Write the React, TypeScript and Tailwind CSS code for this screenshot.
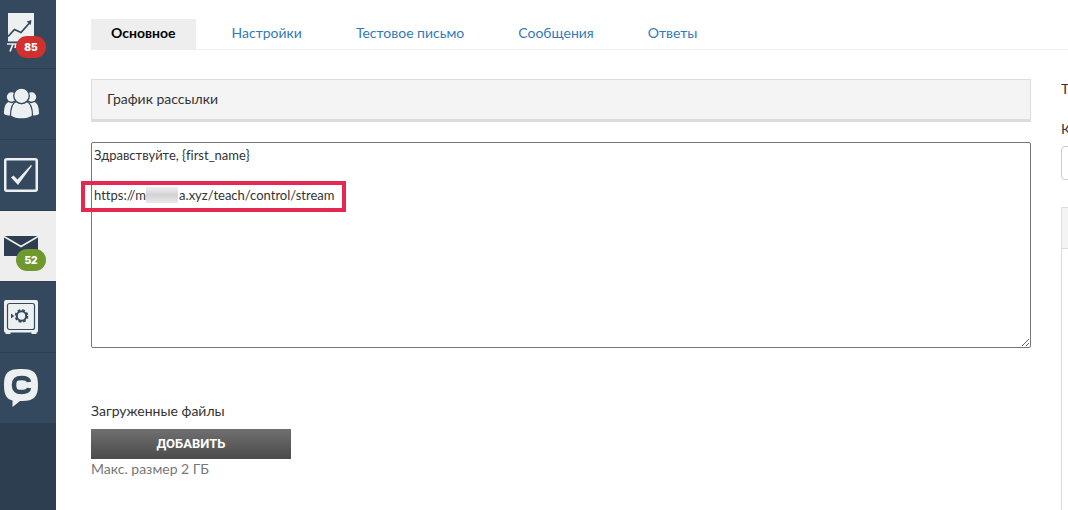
import type { ReactNode } from 'react';

const tabs = ['Настройки', 'Тестовое письмо', 'Сообщения', 'Ответы'];

const initialMessage =
  'Здравствуйте, {first_name}\n\nhttps://m' + '\u00a0'.repeat(10) + 'a.xyz/teach/control/stream';

function ChartIcon() {
  return (
    <svg className="block h-10 w-9" viewBox="0 0 36 40" fill="none" aria-hidden="true">
      <path d="M4 0h26v28.500H4z" fill="#ecf0f1" />
      <path d="M4 23.500l6.500-7 6.500 3 8.500-9.500" stroke="#34495e" strokeWidth="1.800" />
      <path d="M27.500 7l-.8 5-4-3.500z" fill="#34495e" />
      <path d="M3 31h28M9 31l-3 7.500M12 31l-1 4" stroke="#ecf0f1" strokeWidth="1.700" />
    </svg>
  );
}

function UsersIcon() {
  return (
    <svg className="block h-8 w-9" viewBox="0 0 36 32" fill="#ecf0f1" aria-hidden="true">
      <circle cx="7.500" cy="9" r="4.700" />
      <circle cx="27.500" cy="9" r="4.700" />
      <path d="M0 26c0-6 1-10.500 4.500-12 2 1.500 4.500 1.500 6.500 0l2 2-5 11.500c-3 .2-6-.3-8-1.500z" />
      <path d="M35 26c0-6-1-10.500-4.500-12-2 1.500-4.500 1.500-6.500 0l-2 2 5 11.500c3 .2 6-.3 8-1.500z" />
      <path
        d="M6.500 28c0-7 1.500-13 6-14.500 3 2.500 7 2.500 10 0 4.500 1.500 6 7.500 6 14.500-6 4-16 4-22 0z"
        stroke="#34495e"
        strokeWidth="1.300"
      />
      <circle cx="17.500" cy="7.800" r="7.800" stroke="#34495e" strokeWidth="1.300" />
    </svg>
  );
}

function CheckIcon() {
  return (
    <svg className="block h-[34px] w-[34px]" viewBox="0 0 34 34" fill="none" aria-hidden="true">
      <rect x="1.250" y="1.250" width="31.500" height="31.500" rx="1.500" stroke="#ecf0f1" strokeWidth="2.500" />
      <path d="M7 19.500l2.500-2 4 4L27 7l1 .8L14 27z" fill="#ecf0f1" />
    </svg>
  );
}

function MailIcon() {
  return (
    <svg className="block h-5 w-[34px]" viewBox="0 0 34 20" fill="none" aria-hidden="true">
      <path d="M0 0h34v20H0z" fill="#2c3e50" />
      <path d="M0 .5l17 10 17-10" stroke="#eeeeee" strokeWidth="1.600" />
    </svg>
  );
}

function SafeIcon() {
  return (
    <svg className="block h-[34px] w-[34px]" viewBox="0 0 34 34" fill="none" aria-hidden="true">
      <path d="M2 0h30q2 0 2 2v29q0 1.500-1.500 1.500V34h-5v-1.500h-21V34h-5v-1.500Q0 32.500 0 31V2q0-2 2-2z" fill="#ecf0f1" />
      <rect x="3.500" y="3.500" width="27" height="26" rx="2" stroke="#34495e" strokeWidth="1.200" />
      <circle cx="17.500" cy="16" r="4.700" stroke="#34495e" strokeWidth="2" />
      <circle cx="17.500" cy="16" r="6" stroke="#34495e" strokeWidth="1.600" strokeDasharray="2.700 2.012" />
      <path d="M7 13.500l3.200 2.500L7 18.500z" fill="#34495e" />
    </svg>
  );
}

function ChatIcon() {
  return (
    <svg className="block h-[38px] w-[34px]" viewBox="0 0 34 38" fill="none" aria-hidden="true">
      <path
        d="M16 0h2c12 0 16 4 16 16S30 32 18 32h-2l-7.500 6v-6.500C2 30 0 25 0 16 0 4 4 0 16 0z"
        fill="#ecf0f1"
      />
      <path d="M25 13c-.5-3.200-3.500-4-7.500-4C12 9 10 10.500 10 16s2 7 7.500 7c4 0 7-.8 7.500-4" stroke="#34495e" strokeWidth="4.500" />
    </svg>
  );
}

function NavItem({
  label,
  icon,
  badge,
  badgeColor = '',
  className,
}: {
  label: string;
  icon: ReactNode;
  badge?: string;
  badgeColor?: string;
  className: string;
}) {
  return (
    <a href="#" aria-label={label} className={`relative block border-b border-[#2c3e50] pl-1 ${className}`}>
      {icon}
      {badge && (
        <span
          className={`absolute right-2.5 bottom-2.5 flex h-[22px] w-[30px] items-center justify-center rounded-full font-['Inter',sans-serif] text-[10px] font-black text-white ${badgeColor}`}
        >
          {badge}
        </span>
      )}
    </a>
  );
}

export default function App() {
  return (
    <div className="flex min-h-screen overflow-hidden bg-white font-['Lato',sans-serif] text-sm leading-5 text-[#333333]">
      <nav className="w-14 shrink-0 bg-[#2c3e50]" aria-label="Разделы">
        <NavItem label="Статистика" icon={<ChartIcon />} badge="85" badgeColor="bg-[#d0312f]" className="h-[69px] bg-[#34495e] pt-[13px]" />
        <NavItem label="Пользователи" icon={<UsersIcon />} className="h-[71px] bg-[#34495e] pt-[19px]" />
        <NavItem label="Задачи" icon={<CheckIcon />} className="h-[71px] bg-[#34495e] pt-[18px]" />
        <NavItem label="Рассылки" icon={<MailIcon />} badge="52" badgeColor="bg-[#6f982d]" className="h-[71px] bg-[#eeeeee] pt-[25px]" />
        <NavItem label="Продажи" icon={<SafeIcon />} className="h-[71px] bg-[#34495e] pt-[18px]" />
        <NavItem label="Чат" icon={<ChatIcon />} className="h-[71px] bg-[#34495e] pt-4" />
      </nav>

      <main className="flex min-w-0 flex-1 flex-col pt-[19px] pl-[35px]">
        <div className="flex border-b border-[#eeeeee]">
          <a href="#" aria-current="page" className="mr-4 bg-[#eeeeee] px-5 pt-1 pb-1.5 font-bold text-black">
            Основное
          </a>
          {tabs.map((tab) => (
            <a key={tab} href="#" className="mr-3.5 px-5 pt-1 pb-1.5 text-[#337ab7]">
              {tab}
            </a>
          ))}
        </div>

        <div className="flex flex-1 gap-[30px] pt-[29px]">
          <section className="min-w-0 flex-1">
            <h2 className="mb-5 border border-b-3 border-[#dddddd] bg-[#f4f4f4] px-[15px] pt-[9px] pb-[10px]">График рассылки</h2>

            <div className="relative">
              <textarea
                aria-label="Текст сообщения"
                defaultValue={initialMessage}
                spellCheck={false}
                className="block h-[206px] w-full rounded-[2px] border border-[#767676] bg-white p-0.5 text-[13px] leading-5 [font-variant-ligatures:none] outline-none"
              />
              <div className="pointer-events-none absolute top-[39px] -left-[10px] h-[31px] w-[265px] border-4 border-[#e4284f]" />
              <div className="pointer-events-none absolute top-[45px] left-[55px] h-4 w-8 bg-linear-to-b from-[#efeff0] via-[#d3d3d5] to-[#e9e9ea]" />
            </div>

            <div className="mt-[53px]">
              <label htmlFor="add-file" className="mb-2 block">Загруженные файлы</label>
              <button
                id="add-file"
                type="button"
                className="block h-[30px] w-[200px] bg-linear-to-b from-[#707070] to-[#4b4b4b] font-['Roboto',sans-serif] text-[13px] font-bold text-white"
              >
                ДОБАВИТЬ
              </button>
              <p className="text-[#777777]">Макс. размер 2 ГБ</p>
            </div>
          </section>

          <aside className="flex w-[7px] shrink-0 flex-col overflow-hidden">
            <div>Т</div>
            <label htmlFor="category" className="mt-5 mb-[7px] block">К</label>
            <input id="category" type="text" className="block h-[34px] w-40 rounded-sm border border-[#cccccc] bg-white outline-none" />
            <div className="mt-[27px] w-40 flex-1 border-l border-[#dddddd]">
              <div className="h-[42px] border-y border-[#dddddd] bg-[#f4f4f4]" />
            </div>
          </aside>
        </div>
      </main>
    </div>
  );
}
